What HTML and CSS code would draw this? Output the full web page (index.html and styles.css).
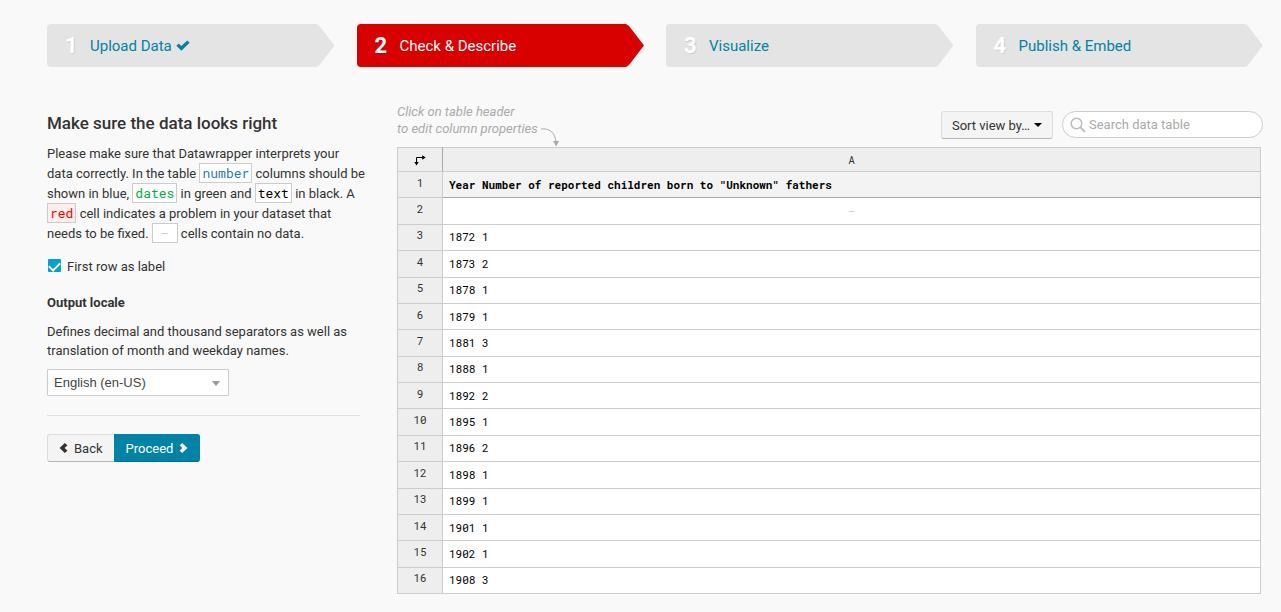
FILE: index.html
```html
<!DOCTYPE html>
<html lang="en">
<head>
    <meta charset="utf-8">
    <title>Check &amp; Describe</title>
    <link rel="stylesheet" href="styles.css">
</head>
<body>
    <nav>
        <ol class="steps">
            <li><a class="step" href="#upload"><span class="step-number">1</span><span>Upload Data</span>
                <svg class="check" width="14" height="11" viewBox="0 0 14 11"><path d="M0.4 5.8 2.7 3.4 5.3 6 11.3 0.4 13.6 2.7 5.4 10.8Z"/></svg></a></li>
            <li><a class="step active" href="#describe"><span class="step-number">2</span><span>Check &amp; Describe</span></a></li>
            <li><a class="step" href="#visualize"><span class="step-number">3</span><span>Visualize</span></a></li>
            <li><a class="step" href="#publish"><span class="step-number">4</span><span>Publish &amp; Embed</span></a></li>
        </ol>
    </nav>

    <main class="columns">
        <section class="sidebar">
            <h1>Make sure the data looks right</h1>
            <p class="intro">
                Please make sure that Datawrapper interprets your<br>
                data correctly. In the table <span class="cell number">number</span> columns should be<br>
                shown in blue, <span class="cell date">dates</span> in green and <span class="cell text">text</span> in black. A<br>
                <span class="cell red">red</span> cell indicates a problem in your dataset that<br>
                needs to be fixed. <span class="cell empty">–</span> cells contain no data.
            </p>

            <label class="checkbox"><input type="checkbox" checked><span>First row as label</span></label>

            <h2>Output locale</h2>
            <label class="help" for="locale">Defines decimal and thousand separators as well as translation of month and weekday names.</label>
            <div class="select-wrap">
                <select id="locale">
                    <option>English (en-US)</option>
                </select>
            </div>

            <hr>

            <div class="btn-group">
                <button type="button" class="btn"><svg width="9" height="10" viewBox="0 0 9 10"><path d="M5.8 0 8.4 2.2 5.6 5 8.4 7.8 5.8 10 0.6 5Z"/></svg>Back</button>
                <button type="button" class="btn primary">Proceed<svg width="9" height="10" viewBox="0 0 9 10"><path d="M3.2 0 0.6 2.2 3.4 5 0.6 7.8 3.2 10 8.4 5Z"/></svg></button>
            </div>
        </section>

        <section class="data">
            <div class="toolbar">
                <div class="hint">
                    <p>Click on table header<br>to edit column properties</p>
                    <svg width="20" height="20" viewBox="0 0 20 20"><path class="line" d="M1 2C9 1 15 5 16 15"/><path class="head" d="M13 14 19 14 16.2 19.5Z"/></svg>
                </div>
                <div class="tools">
                    <button type="button" class="btn sort">Sort view by…<span class="caret"></span></button>
                    <label class="search">
                        <svg width="16" height="16" viewBox="0 0 16 16"><circle cx="6.5" cy="6.5" r="5.3"/><path d="M10.6 10.6 14.4 14.4"/></svg>
                        <input type="search" placeholder="Search data table" aria-label="Search data table">
                    </label>
                </div>
            </div>

            <table class="sheet">
                <thead>
                    <tr>
                        <th class="corner"><svg width="12" height="12" viewBox="0 0 12 12"><path class="line" d="M2.5 9V3.5H9"/><path class="head" d="M0.3 8H4.7L2.5 11.5Z"/><path class="head" d="M8.2 1.2V5.8L11.7 3.5Z"/></svg></th>
                        <th class="letter">A</th>
                    </tr>
                </thead>
                <tbody>
                    <tr class="label-row"><th>1</th><td>Year Number of reported children born to "Unknown" fathers</td></tr>
                    <tr><th>2</th><td class="nodata">–</td></tr>
                    <tr><th>3</th><td>1872 1</td></tr>
                    <tr><th>4</th><td>1873 2</td></tr>
                    <tr><th>5</th><td>1878 1</td></tr>
                    <tr><th>6</th><td>1879 1</td></tr>
                    <tr><th>7</th><td>1881 3</td></tr>
                    <tr><th>8</th><td>1888 1</td></tr>
                    <tr><th>9</th><td>1892 2</td></tr>
                    <tr><th>10</th><td>1895 1</td></tr>
                    <tr><th>11</th><td>1896 2</td></tr>
                    <tr><th>12</th><td>1898 1</td></tr>
                    <tr><th>13</th><td>1899 1</td></tr>
                    <tr><th>14</th><td>1901 1</td></tr>
                    <tr><th>15</th><td>1902 1</td></tr>
                    <tr><th>16</th><td>1908 3</td></tr>
                </tbody>
            </table>
        </section>
    </main>
</body>
</html>
```

FILE: styles.css
```css
* {
    box-sizing: border-box;
}
body {
    margin: 0;
    padding: 24px 18px 0 47px;
    background: #f9f9f9;
    color: #333;
    font: 13px/20px Roboto, sans-serif;
}

/* steps */
.steps {
    display: grid;
    grid-template-columns: repeat(4, 1fr);
    gap: 22px;
    margin: 0;
    padding: 0;
    list-style: none;
}
.step {
    display: flex;
    align-items: center;
    height: 43px;
    padding-left: 18px;
    border-radius: 4px;
    background: #e4e4e4;
    clip-path: polygon(0 0, calc(100% - 18px) 0, calc(100% - 15px) 2px, 100% 50%, calc(100% - 15px) calc(100% - 2px), calc(100% - 18px) 100%, 0 100%);
    color: #0083a5;
    font-size: 15px;
    text-decoration: none;
}
.step.active {
    background: #d90000;
    color: #fff;
}
.step-number {
    width: 25px;
    color: #fff;
    font-size: 22px;
    font-weight: 700;
    text-shadow: 1px 1px 1px rgba(0, 0, 0, 0.1);
}
.check {
    margin-left: 4px;
    fill: #0083a5;
}

.columns {
    display: grid;
    grid-template-columns: minmax(0, 313fr) minmax(0, 866fr);
    gap: 37px;
    margin-top: 35px;
}

/* left side */
h1 {
    margin: 11px 0;
    font-size: 17px;
    line-height: 20px;
    font-weight: 500;
}
p {
    margin: 0;
}
.intro {
    white-space: nowrap;
}
.cell {
    padding: 0 2px;
    border: 1px solid #ccc;
    background: #fff;
    font: 13px/16px "Roboto Mono", "DejaVu Sans Mono", monospace;
}
.number {
    color: #1d81a2;
}
.date {
    color: #00b140;
}
.text {
    color: #000;
}
.red {
    background: #fee;
    color: #f00;
}
.empty {
    padding: 0 8px;
    color: #ccc;
}
.checkbox {
    display: flex;
    align-items: center;
    gap: 6px;
    margin-top: 13px;
}
.checkbox input {
    display: flex;
    justify-content: center;
    width: 13px;
    height: 13px;
    margin: 0 0 3px 1px;
    border-radius: 1px;
    appearance: none;
    background: #00a1d4;
}
.checkbox input:checked::after {
    content: "";
    width: 5px;
    height: 9px;
    margin-top: 1px;
    border: solid #fff;
    border-width: 0 2px 2px 0;
    transform: rotate(45deg);
}
h2 {
    margin: 16px 0 9px;
    font-size: 13px;
    line-height: 20px;
    font-weight: 700;
}
.help {
    display: block;
    line-height: 19px;
}
.select-wrap {
    position: relative;
    width: 182px;
    margin-top: 9px;
}
.select-wrap::after {
    content: "";
    position: absolute;
    right: 9px;
    top: 12px;
    border: 4px solid transparent;
    border-top: 5px solid #999;
    pointer-events: none;
}
select {
    display: block;
    width: 100%;
    height: 27px;
    padding: 0 6px;
    border: 1px solid #ccc;
    border-radius: 1px;
    appearance: none;
    background: #fff;
    color: #444;
    font: 13px "Liberation Sans", sans-serif;
}
hr {
    margin: 19px 0 18px;
    border: 0;
    border-top: 1px solid #e0e0e0;
}
.btn-group {
    display: flex;
}
.btn {
    display: flex;
    align-items: center;
    gap: 6px;
    height: 28px;
    padding: 0 11px;
    border: 1px solid #ddd;
    border-bottom-color: #b3b3b3;
    border-radius: 3px;
    background: #f4f4f4;
    color: #333;
    font: 13px Roboto, sans-serif;
}
.btn svg {
    fill: currentColor;
}
.btn-group .btn:first-child {
    border-right: 0;
    border-radius: 3px 0 0 3px;
}
.btn-group .primary {
    border-color: #0083a5;
    border-bottom-color: #00708d;
    border-radius: 0 3px 3px 0;
    background: #0083a5;
    color: #fff;
}

/* table side */
.toolbar {
    display: flex;
    justify-content: space-between;
    height: 45px;
}
.hint {
    display: flex;
    align-items: flex-end;
    gap: 2px;
    height: 45px;
    color: #aaa;
    font-style: italic;
    line-height: 17px;
}
.hint p {
    align-self: flex-start;
    padding-top: 1px;
}
.hint svg,
.corner svg {
    display: block;
}
.line {
    fill: none;
    stroke: currentColor;
}
.head {
    fill: currentColor;
}
.tools {
    display: flex;
    gap: 9px;
    padding-top: 9px;
}
.sort {
    gap: 4px;
    padding: 0 10px;
}
.caret {
    border: 4px solid transparent;
    border-top-color: #000;
    border-bottom: 0;
}
.search {
    display: flex;
    align-items: center;
    gap: 3px;
    width: 201px;
    height: 27px;
    padding: 0 7px;
    border: 1px solid #ccc;
    border-radius: 14px;
    background: #fff;
}
.search svg {
    flex: none;
    fill: none;
    stroke: #bbb;
    stroke-width: 1.5;
}
.search path {
    stroke-width: 2;
    stroke-linecap: round;
}
.search input {
    width: 100%;
    padding: 0;
    border: 0;
    outline: 0;
    background: none;
    font: 13px Roboto, sans-serif;
}
.search input::placeholder {
    color: #aaa;
}
.sheet {
    width: calc(100% - 2px);
    height: calc(100vh - 165px);
    border-collapse: collapse;
    table-layout: fixed;
    font: 11px/14px "Roboto Mono", "DejaVu Sans Mono", monospace;
    color: #000;
}
.sheet th,
.sheet td {
    padding: 0 6px;
    border: 1px solid #ccc;
    text-align: left;
}
.sheet td {
    background: #fff;
}
.sheet th {
    padding-bottom: 4px;
    background: #eee;
    color: #333;
    font-weight: 400;
    text-align: center;
}
.sheet thead th {
    height: 24px;
    padding: 0;
}
.sheet .corner {
    width: 45px;
    border-right-color: #aaa;
    color: #000;
}
.corner svg {
    margin: 0 auto;
}
.sheet .label-row td {
    border-bottom-color: #aaa;
    background: #f3f3f3;
    font-weight: 700;
}
.sheet .nodata {
    color: #ccc;
    text-align: center;
}
```
